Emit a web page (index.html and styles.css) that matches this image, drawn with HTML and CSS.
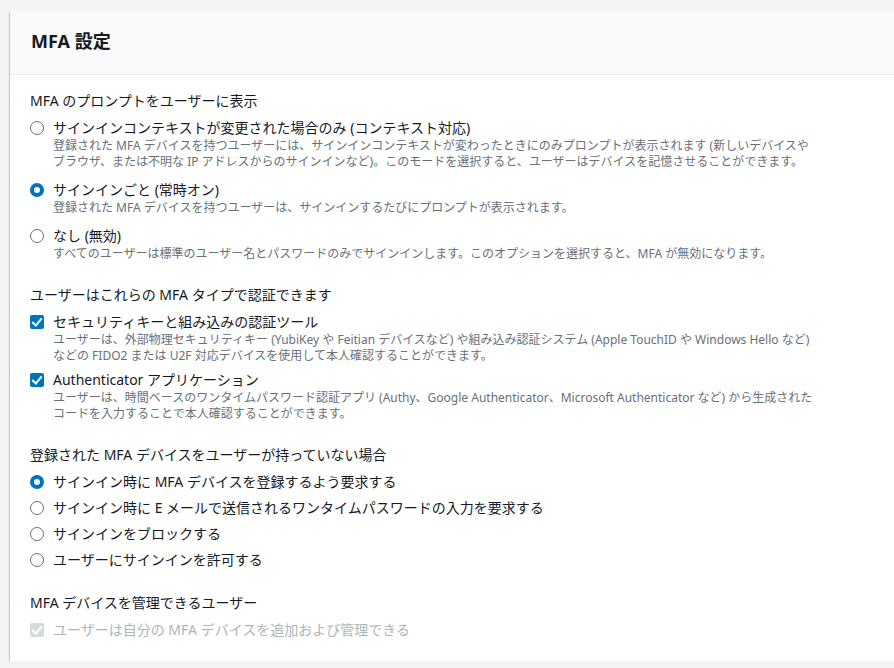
FILE: index.html
```html
<!DOCTYPE html>
<html lang="ja">
<head>
    <meta charset="UTF-8">
    <meta name="viewport" content="width=device-width, initial-scale=1.0">
    <title>MFA 設定</title>
    <link rel="stylesheet" href="styles.css">
</head>
<body>
    <div class="card">
        <div class="card-header">
            <h2>MFA 設定</h2>
        </div>

        <div class="card-body">
            <div class="section">
                <div class="legend">MFA のプロンプトをユーザーに表示</div>
                <div class="options spaced">
                    <div class="option">
                        <span class="radio"></span>
                        <div class="option-text">
                            <div class="label">サインインコンテキストが変更された場合のみ (コンテキスト対応)</div>
                            <div class="desc">登録された MFA デバイスを持つユーザーには、サインインコンテキストが変わったときにのみプロンプトが表示されます (新しいデバイスやブラウザ、または不明な IP アドレスからのサインインなど)。このモードを選択すると、ユーザーはデバイスを記憶させることができます。</div>
                        </div>
                    </div>
                    <div class="option">
                        <span class="radio checked"></span>
                        <div class="option-text">
                            <div class="label">サインインごと (常時オン)</div>
                            <div class="desc">登録された MFA デバイスを持つユーザーは、サインインするたびにプロンプトが表示されます。</div>
                        </div>
                    </div>
                    <div class="option">
                        <span class="radio"></span>
                        <div class="option-text">
                            <div class="label">なし (無効)</div>
                            <div class="desc">すべてのユーザーは標準のユーザー名とパスワードのみでサインインします。このオプションを選択すると、MFA が無効になります。</div>
                        </div>
                    </div>
                </div>
            </div>

            <div class="section">
                <div class="legend">ユーザーはこれらの MFA タイプで認証できます</div>
                <div class="options">
                    <div class="option">
                        <span class="checkbox checked"></span>
                        <div class="option-text">
                            <div class="label">セキュリティキーと組み込みの認証ツール</div>
                            <div class="desc">ユーザーは、外部物理セキュリティキー (YubiKey や Feitian デバイスなど) や組み込み認証システム (Apple TouchID や Windows Hello など) などの FIDO2 または U2F 対応デバイスを使用して本人確認することができます。</div>
                        </div>
                    </div>
                    <div class="option">
                        <span class="checkbox checked"></span>
                        <div class="option-text">
                            <div class="label">Authenticator アプリケーション</div>
                            <div class="desc">ユーザーは、時間ベースのワンタイムパスワード認証アプリ (Authy、Google Authenticator、Microsoft Authenticator など) から生成されたコードを入力することで本人確認することができます。</div>
                        </div>
                    </div>
                </div>
            </div>

            <div class="section">
                <div class="legend">登録された MFA デバイスをユーザーが持っていない場合</div>
                <div class="options">
                    <div class="option">
                        <span class="radio checked"></span>
                        <div class="label">サインイン時に MFA デバイスを登録するよう要求する</div>
                    </div>
                    <div class="option">
                        <span class="radio"></span>
                        <div class="label">サインイン時に E メールで送信されるワンタイムパスワードの入力を要求する</div>
                    </div>
                    <div class="option">
                        <span class="radio"></span>
                        <div class="label">サインインをブロックする</div>
                    </div>
                    <div class="option">
                        <span class="radio"></span>
                        <div class="label">ユーザーにサインインを許可する</div>
                    </div>
                </div>
            </div>

            <div class="section">
                <div class="legend">MFA デバイスを管理できるユーザー</div>
                <div class="options">
                    <div class="option disabled">
                        <span class="checkbox checked"></span>
                        <div class="label">ユーザーは自分の MFA デバイスを追加および管理できる</div>
                    </div>
                </div>
            </div>
        </div>
    </div>
</body>
</html>
```

FILE: styles.css
```css
body {
    margin: 0;
    background-color: #f2f3f3;
    font-family: "Noto Sans", "Noto Sans CJK JP", sans-serif;
    color: #16191f;
}
.card {
    margin: 11px -20px 0 10px;
    background: white;
    box-shadow: 0 1px 1px 0 rgba(0,28,36,0.3), 1px 1px 1px 0 rgba(0,28,36,0.15), -1px 1px 1px 0 rgba(0,28,36,0.15);
}
.card-header {
    background: #fafafa;
    border-bottom: 1px solid #eaeded;
    height: 63px;
    padding: 0 21px;
    display: flex;
    align-items: center;
}
.card-header h2 {
    margin: 0;
    font-size: 18px;
    font-weight: bold;
    line-height: 22px;
    margin-top: -4px;
}
.card-body {
    padding: 16px 20px 21px;
}
.section {
    display: flex;
    flex-direction: column;
    gap: 7px;
}
.section + .section {
    margin-top: 23px;
}
.legend {
    font-size: 14px;
    line-height: 20px;
}
.options {
    display: flex;
    flex-direction: column;
    gap: 6px;
}
.options.spaced {
    gap: 10px;
}
.option {
    display: flex;
    gap: 9px;
}
.label {
    font-size: 14px;
    line-height: 20px;
}
.desc {
    font-size: 12px;
    line-height: 16px;
    color: #687078;
    max-width: 762px;
}
.radio, .checkbox {
    flex: none;
    width: 14px;
    height: 14px;
    margin-top: 3px;
    box-sizing: border-box;
}
.radio {
    border: 1.5px solid #687078;
    border-radius: 50%;
}
.radio.checked {
    border: 4px solid #0073bb;
}
.checkbox {
    border-radius: 2px;
    position: relative;
}
.checkbox.checked {
    background: #0073bb;
}
.checkbox.checked::after {
    content: "";
    position: absolute;
    left: 4px;
    top: 1px;
    width: 4px;
    height: 8px;
    border: solid white;
    border-width: 0 2px 2px 0;
    transform: rotate(40deg);
}
.option.disabled .checkbox {
    background: #d5dbdb;
}
.option.disabled .label {
    color: #aab7b8;
}
```
